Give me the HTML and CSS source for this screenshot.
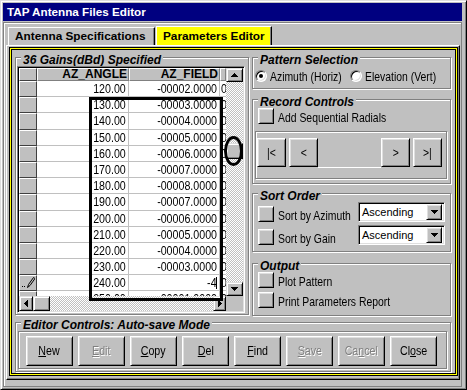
FILE: index.html
```html
<!DOCTYPE html>
<html>
<head>
<meta charset="utf-8">
<title>TAP Antenna Files Editor</title>
<link rel="stylesheet" href="styles.css">
</head>
<body>
<div class="window">
  <div class="titlebar">TAP Antenna Files Editor</div>
  <div class="client">
    <div class="tabs">
      <div class="tab tab1">Antenna Specifications</div>
      <div class="tab tab2">Parameters Editor</div>
    </div>
    <div class="panel">
      <div class="focus">
        <div class="top">
          <div class="group gains">
            <div class="legend">36 Gains(dBd) Specified</div>
            <div class="grid">
              <div class="gmain">
                <div class="ghead">
                  <div class="sel"></div>
                  <div class="hc c1">AZ_ANGLE</div>
                  <div class="hc c2">AZ_FIELD</div>
                  <div class="hc c3"></div>
                </div>
                <div class="row"><div class="sel"></div><div class="cell c1"><span>120.00</span></div><div class="cell c2"><span>-00002.0000</span></div><div class="cell c3"><span>0</span></div></div>
                <div class="row"><div class="sel"></div><div class="cell c1"><span>130.00</span></div><div class="cell c2"><span>-00003.0000</span></div><div class="cell c3"><span>0</span></div></div>
                <div class="row"><div class="sel"></div><div class="cell c1"><span>140.00</span></div><div class="cell c2"><span>-00004.0000</span></div><div class="cell c3"><span>0</span></div></div>
                <div class="row"><div class="sel"></div><div class="cell c1"><span>150.00</span></div><div class="cell c2"><span>-00005.0000</span></div><div class="cell c3"><span>0</span></div></div>
                <div class="row"><div class="sel"></div><div class="cell c1"><span>160.00</span></div><div class="cell c2"><span>-00006.0000</span></div><div class="cell c3"><span>0</span></div></div>
                <div class="row"><div class="sel"></div><div class="cell c1"><span>170.00</span></div><div class="cell c2"><span>-00007.0000</span></div><div class="cell c3"><span>0</span></div></div>
                <div class="row"><div class="sel"></div><div class="cell c1"><span>180.00</span></div><div class="cell c2"><span>-00008.0000</span></div><div class="cell c3"><span>0</span></div></div>
                <div class="row"><div class="sel"></div><div class="cell c1"><span>190.00</span></div><div class="cell c2"><span>-00007.0000</span></div><div class="cell c3"><span>0</span></div></div>
                <div class="row"><div class="sel"></div><div class="cell c1"><span>200.00</span></div><div class="cell c2"><span>-00006.0000</span></div><div class="cell c3"><span>0</span></div></div>
                <div class="row"><div class="sel"></div><div class="cell c1"><span>210.00</span></div><div class="cell c2"><span>-00005.0000</span></div><div class="cell c3"><span>0</span></div></div>
                <div class="row"><div class="sel"></div><div class="cell c1"><span>220.00</span></div><div class="cell c2"><span>-00004.0000</span></div><div class="cell c3"><span>0</span></div></div>
                <div class="row"><div class="sel"></div><div class="cell c1"><span>230.00</span></div><div class="cell c2"><span>-00003.0000</span></div><div class="cell c3"><span>0</span></div></div>
                <div class="row"><div class="sel edit"><svg width="14" height="12" viewBox="0 0 14 12"><rect x="1" y="10" width="1" height="1"/><rect x="3" y="10" width="1" height="1"/><path d="M6.5 11.5 L7.5 8.5 L12.5 1.5 L14 2.5 L9 9.5 Z" fill="none" stroke="#000" stroke-width="1"/></svg></div><div class="cell c1"><span>240.00</span></div><div class="cell c2"><span>-4</span><i class="caret"></i></div><div class="cell c3"><span>0</span></div></div>
                <div class="row"><div class="sel"></div><div class="cell c1"><span>250.00</span></div><div class="cell c2"><span>-00001.0000</span></div><div class="cell c3"><span>0</span></div></div>
              </div>
              <div class="vscroll">
                <div class="sbtn vb"><svg width="7" height="4"><path d="M3 0h1v1h1v1h1v1h1v1H0V3h1V2h1V1h1z"/></svg></div>
                <div class="vtrack"><div class="thumbv"></div></div>
                <div class="sbtn vb"><svg width="7" height="4"><path d="M0 0h7v1h-1v1h-1v1h-1v1h-1v-1h-1v-1h-1v-1h-1z"/></svg></div>
              </div>
              <div class="hscroll">
                <div class="sbtn hl"><svg width="4" height="7"><path d="M3 0h1v7h-1v-1h-1v-1h-1v-1h-1v-1h1v-1h1v-1h1z"/></svg></div>
                <div class="sbtn thumbh"></div>
                <div class="htrack"></div>
                <div class="sbtn hr"><svg width="4" height="7"><path d="M0 0h1v1h1v1h1v1h1v1h-1v1h-1v1h-1v1h-1z"/></svg></div>
              </div>
              <div class="corner"></div>
              <div class="mark-box"></div>
              <div class="mark-ellipse"></div>
            </div>
          </div>
          <div class="side">
            <div class="group pattern">
              <div class="legend">Pattern Selection</div>
              <div class="radios">
                <div class="ritem r1"><span class="radio on"></span><span class="lbl">Azimuth (Horiz)</span></div>
                <div class="ritem"><span class="radio"></span><span class="lbl">Elevation (Vert)</span></div>
              </div>
            </div>
            <div class="group record">
              <div class="legend">Record Controls</div>
              <div class="chk"><span class="btn sq"></span><span class="lbl">Add Sequential Radials</span></div>
              <div class="nav">
                <div class="btn nb"><span class="nx">|&lt;</span></div>
                <div class="btn nb nb2"><span class="nx">&lt;</span></div>
                <div class="navmid"></div>
                <div class="btn nb"><span class="nx">&gt;</span></div>
                <div class="btn nb nb2"><span class="nx">&gt;|</span></div>
              </div>
            </div>
            <div class="group sort">
              <div class="legend">Sort Order</div>
              <div class="srow"><span class="btn sq"></span><span class="lbl">Sort by Azimuth</span>
                <div class="combo"><span class="ctext">Ascending</span><span class="btn cbtn"><svg width="7" height="4"><path d="M0 0h7v1h-1v1h-1v1h-1v1h-1v-1h-1v-1h-1v-1h-1z"/></svg></span></div>
              </div>
              <div class="srow srow2"><span class="btn sq"></span><span class="lbl">Sort by Gain</span>
                <div class="combo"><span class="ctext">Ascending</span><span class="btn cbtn"><svg width="7" height="4"><path d="M0 0h7v1h-1v1h-1v1h-1v1h-1v-1h-1v-1h-1v-1h-1z"/></svg></span></div>
              </div>
            </div>
            <div class="group output">
              <div class="legend">Output</div>
              <div class="chk"><span class="btn sq"></span><span class="lbl">Plot Pattern</span></div>
              <div class="chk chk2"><span class="btn sq"></span><span class="lbl">Print Parameters Report</span></div>
            </div>
          </div>
        </div>
        <div class="group editor">
          <div class="legend">Editor Controls: Auto-save Mode</div>
          <div class="btnpanel">
            <div class="btn eb"><span class="nx"><u>N</u>ew</span></div>
            <div class="btn eb dis"><span class="nx"><u>E</u>dit</span></div>
            <div class="btn eb"><span class="nx"><u>C</u>opy</span></div>
            <div class="btn eb"><span class="nx"><u>D</u>el</span></div>
            <div class="btn eb"><span class="nx"><u>F</u>ind</span></div>
            <div class="btn eb dis"><span class="nx"><u>S</u>ave</span></div>
            <div class="btn eb dis"><span class="nx">Ca<u>n</u>cel</span></div>
            <div class="btn eb"><span class="nx">Cl<u>o</u>se</span></div>
          </div>
        </div>
      </div>
    </div>
  </div>
</div>
</body>
</html>
```

FILE: styles.css
```css
* { box-sizing: border-box; }
body {
  margin: 0;
  background: #c0c0c0;
  font-family: "Liberation Sans", Arial, sans-serif;
  font-size: 12.7px;
  color: #000;
}
/* narrow text: the original UI font is a condensed sans */
.lbl, .nx, .cell span {
  display: inline-block;
  transform: scaleX(0.82);
  white-space: nowrap;
}
.lbl { transform-origin: left center; line-height: 12px; min-width: 0; }
.nx { transform-origin: center; line-height: 14px; }
.cell span { transform-origin: right center; }
.cell.c3 span { transform-origin: left center; }

.window {
  width: 467px;
  height: 390px;
  border: 1px solid;
  border-color: #dfdfdf #000 #000 #dfdfdf;
  box-shadow: inset 1px 1px #fff, inset -1px -1px #808080;
  padding: 2px 4px 2px 2px;
  display: flex;
  flex-direction: column;
  background: #c0c0c0;
}
.titlebar {
  flex: none;
  height: 18px;
  background: #000080;
  color: #fff;
  font: bold 11.7px/18px "Liberation Sans", Arial, sans-serif;
  padding-left: 4px;
  white-space: nowrap;
}
.client {
  flex: 1;
  margin-top: 1px;
  border: 1px solid #808080;
  box-shadow: inset 1px 1px #fff;
  padding: 3px 1px 1px 2px;
}
.tabs { display: flex; height: 19px; margin-left: 2px; }
.tab {
  font: bold 11.8px/16px "Liberation Sans", Arial, sans-serif;
  border: 1px solid;
  border-bottom: 0;
  border-color: #fff #000 #000 #fff;
  box-shadow: inset -1px 0 #808080;
  padding-left: 6px;
  white-space: nowrap;
}
.tab1 { width: 147px; height: 18px; margin-top: 1px; }
.tab2 { width: 116px; height: 19px; margin-left: 1px; background: #ffff00; padding-top: 1px; }
.panel {
  height: 335px;
  border: 1px solid;
  border-color: #fff #000 #000 #fff;
  box-shadow: inset -1px -1px #808080;
  padding: 1px 1px 2px 2px;
}
.focus {
  height: 329px;
  border: 1px solid #000;
  box-shadow: inset 0 0 0 1px #ffff00, inset 0 0 0 2px #000;
  padding: 9px 0 0 5px;
}
.top { display: flex; gap: 3px; }
.group {
  border: 1px solid #808080;
  box-shadow: inset 1px 1px #fff, 1px 1px #fff;
}
.legend {
  font: italic bold 12px/14px "Liberation Sans", Arial, sans-serif;
  margin: -5px 0 -1px 5px;
  padding: 0 2px;
  background: #c0c0c0;
  width: max-content;
  white-space: nowrap;
}

/* ---- grid ---- */
.gains { width: 234px; height: 258px; }
.grid {
  position: relative;
  margin-left: 1px;
  width: 228px;
  height: 247px;
  border: 1px solid;
  border-color: #808080 #fff #fff #808080;
  box-shadow: inset 1px 1px #000, inset -1px -1px #dfdfdf;
  padding: 1px;
  display: grid;
  grid-template-columns: 207px 17px;
  grid-template-rows: 228px 15px;
}
.gmain { overflow: hidden; background: #fff; }
.ghead { display: flex; height: 13px; }
.sel {
  flex: none;
  width: 18px;
  background: #c0c0c0;
  border: 1px solid;
  border-color: #fff #404040 #404040 #fff;
}
.hc {
  flex: none;
  background: #c0c0c0;
  border: 1px solid;
  border-color: #fff #808080 #808080 #fff;
  font: bold 12px/11px "Liberation Sans", Arial, sans-serif;
  text-align: right;
  padding-right: 1px;
}
.c1 { width: 92px; }
.c2 { width: 91px; }
.c3 { width: 6px; }
.row { display: flex; height: 16.2px; }
.cell {
  flex: none;
  border-right: 1px solid #c0c0c0;
  border-bottom: 1px solid #c0c0c0;
  font-size: 13px;
  line-height: 15px;
  text-align: right;
  padding-right: 2px;
  overflow: hidden;
  white-space: nowrap;
}
.cell.c3 { text-align: left; padding: 0 0 0 1px; border-right: 0; }
.sel.edit svg { display: block; margin: 0 0 0 1px; }
.caret { display: inline-block; width: 1px; height: 12px; background: #000; vertical-align: -2px; margin-left: -1px; }

.sbtn, .thumbv {
  background: #c0c0c0;
  border: 1px solid;
  border-color: #dfdfdf #000 #000 #dfdfdf;
  box-shadow: inset 1px 1px #fff, inset -1px -1px #808080;
  display: flex;
  align-items: center;
  justify-content: center;
}
.sbtn svg { display: block; }
.vtrack, .htrack {
  background-color: #fff;
  background-image: conic-gradient(#c0c0c0 0 25%, #fff 0 50%, #c0c0c0 0 75%, #fff 0);
  background-size: 2px 2px;
}
.vscroll { display: flex; flex-direction: column; height: 228px; }
.vb { height: 14px; flex: none; }
.vtrack { height: 200px; flex: none; padding-top: 61px; }
.thumbv { width: 17px; height: 16px; }
.hscroll { display: flex; }
.hl { width: 14px; flex: none; }
.thumbh { width: 17px; flex: none; }
.htrack { flex: 1; }
.hr { width: 13px; flex: none; }
.corner { background: #c0c0c0; }
.mark-box {
  position: absolute;
  left: 71px;
  top: 30px;
  width: 134px;
  height: 204px;
  border: 3px solid #000;
}
.mark-ellipse {
  position: absolute;
  left: 206px;
  top: 69px;
  width: 19px;
  height: 30px;
  border: 3px solid #000;
  border-radius: 50%;
}

/* ---- side ---- */
.side { width: 199px; display: flex; flex-direction: column; }
.pattern { height: 32px; }
.record { height: 85px; margin-top: 10px; }
.sort { height: 59px; margin-top: 9px; }
.output { height: 53px; margin-top: 11px; }
.radios { display: flex; align-items: center; height: 14px; margin: 3px 0 0 2px; }
.ritem { display: flex; align-items: center; gap: 3px; }
.ritem .lbl { padding-top: 2px; }
.r1 { width: 95px; flex: none; }
.radio {
  flex: none;
  position: relative;
  width: 12px;
  height: 12px;
  border-radius: 50%;
  border: 1px solid;
  border-color: #808080 #fff #fff #808080;
  box-shadow: inset 1px 1px #000, inset -1px -1px #dfdfdf;
  background: #fff;
}
.radio.on::after {
  content: "";
  position: absolute;
  left: 3px;
  top: 3px;
  width: 4px;
  height: 4px;
  border-radius: 50%;
  background: #000;
}
.btn {
  background: #c0c0c0;
  border: 1px solid;
  border-color: #fff #000 #000 #fff;
  box-shadow: inset 1px 1px #dfdfdf, inset -1px -1px #808080;
}
.sq { flex: none; display: block; width: 16px; height: 16px; }
.chk { display: flex; align-items: flex-end; gap: 4px; height: 16px; margin-left: 5px; }
.chk2 { margin-top: 4px; }
.nav {
  display: flex;
  margin: 7px 0 0 2px;
  width: 192px;
  height: 48px;
  border: 1px solid #808080;
  box-shadow: inset 1px 1px #fff, 1px 1px #fff;
  padding: 6px 0 0 1px;
}
.nb {
  flex: none;
  width: 29px;
  height: 29px;
  display: flex;
  align-items: center;
  justify-content: center;
}
.nb2 { margin-left: 3px; }
.navmid { flex: none; width: 63px; height: 30px; border-bottom: 1px solid #fff; }
.srow { display: flex; align-items: flex-end; gap: 4px; height: 20px; margin: -1px 5px 0 5px; }
.srow2 { margin-top: 3px; }
.combo {
  flex: none;
  margin-left: auto;
  display: flex;
  align-items: center;
  width: 87px;
  height: 20px;
  border: 1px solid;
  border-color: #808080 #fff #fff #808080;
  box-shadow: inset 1px 1px #000, inset -1px -1px #dfdfdf;
  background: #fff;
  padding: 2px;
}
.ctext {
  flex: 1;
  font: 11px/14px "Liberation Sans", Arial, sans-serif;
  padding-left: 1px;
  white-space: nowrap;
}
.cbtn {
  flex: none;
  width: 16px;
  height: 16px;
  display: flex;
  align-items: center;
  justify-content: center;
}
.cbtn svg { display: block; }

/* ---- editor ---- */
.editor { width: 436px; height: 50px; margin-top: 6px; }
.btnpanel {
  display: flex;
  gap: 5px;
  margin-left: 2px;
  width: 429px;
  height: 38px;
  border: 1px solid #808080;
  box-shadow: inset 1px 1px #fff, 1px 1px #fff;
  padding: 4px 0 0 7px;
}
.eb {
  flex: none;
  width: 47px;
  height: 30px;
  display: flex;
  align-items: center;
  justify-content: center;
  font-size: 13px;
}
.dis { color: #808080; text-shadow: 1px 1px #fff; }
```
